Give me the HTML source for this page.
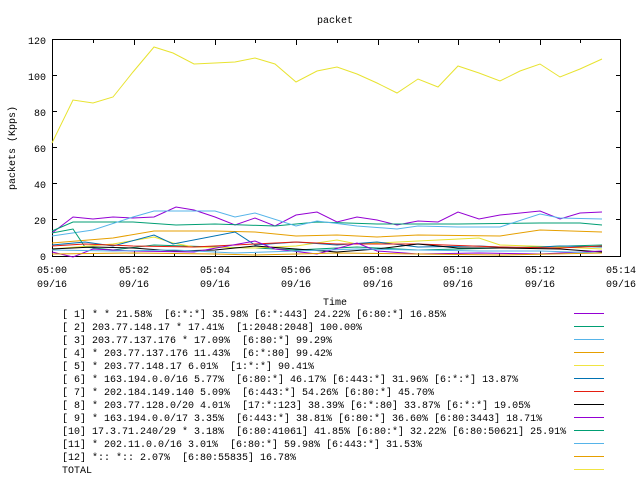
<!DOCTYPE html>
<html><head><meta charset="utf-8"><style>
html,body{margin:0;padding:0;background:#fff;width:640px;height:480px;overflow:hidden}
svg text{font-family:"Liberation Mono","DejaVu Sans Mono",monospace;font-size:10px;fill:#000;white-space:pre}
</style></head><body>
<svg width="640" height="480" xmlns="http://www.w3.org/2000/svg" xml:space="preserve">
<rect width="640" height="480" fill="#fff"/>
<text x="335" y="23" text-anchor="middle">packet</text>
<g text-anchor="end">
<text x="46" y="44">120</text><text x="46" y="80">100</text><text x="46" y="116">80</text>
<text x="46" y="152">60</text><text x="46" y="188">40</text><text x="46" y="224">20</text><text x="46" y="260">0</text>
</g>
<text transform="translate(15,148) rotate(-90)" text-anchor="middle">packets (Kpps)</text>
<g text-anchor="middle">
<text x="52" y="273">05:00</text><text x="52" y="287">09/16</text>
<text x="134" y="273">05:02</text><text x="134" y="287">09/16</text>
<text x="215" y="273">05:04</text><text x="215" y="287">09/16</text>
<text x="296" y="273">05:06</text><text x="296" y="287">09/16</text>
<text x="378" y="273">05:08</text><text x="378" y="287">09/16</text>
<text x="458" y="273">05:10</text><text x="458" y="287">09/16</text>
<text x="540" y="273">05:12</text><text x="540" y="287">09/16</text>
<text x="621" y="273">05:14</text><text x="621" y="287">09/16</text>
<text x="335" y="305">Time</text>
</g>
<g stroke="#000" stroke-width="1" fill="none">
<rect x="52.5" y="39.5" width="568" height="217"/>
<path d="M52 75.5h5M52 111.5h5M52 147.5h5M52 183.5h5M52 219.5h5M621 75.5h-5M621 111.5h-5M621 147.5h-5M621 183.5h-5M621 219.5h-5
M134.5 256v-5M215.5 256v-5M296.5 256v-5M378.5 256v-5M458.5 256v-5M540.5 256v-5
M134.5 40v5M215.5 40v5M296.5 40v5M378.5 40v5M458.5 40v5M540.5 40v5
M93.5 256v-3M174.5 256v-3M255.5 256v-3M337.5 256v-3M418.5 256v-3M499.5 256v-3M580.5 256v-3
M93.5 40v3M174.5 40v3M255.5 40v3M337.5 40v3M418.5 40v3M499.5 40v3M580.5 40v3"/>
</g>
<g fill="none" stroke-width="1">
<polyline stroke="#e8e330" points="52,143 73,100 93,103 113,97 133,72 154,47 173,53 194,64 215,63 235,62 255,58 275,64 296,82 317,71 337,67 357,74 377,83 397,93 418,79 438,87 458,66 479,73 500,81 520,71 540,64 560,77 580,69 602,59"/>
<polyline stroke="#9400d3" points="52,233 73,217 93,219 113,217 133,218 154,217 176,207 194,210 215,217 235,225 255,218 275,226 296,215 317,212 337,222 357,217 377,220 397,225 418,221 438,222 458,212 479,219 500,215 540,211 560,219 580,213 602,212"/>
<polyline stroke="#009e73" points="52,231 73,222 133,222 176,225 215,224 275,226 317,222 377,224 458,224 540,223 580,223 602,225"/>
<polyline stroke="#56b4e9" points="52,236 93,230 133,217 154,211 215,211 235,217 255,213 296,226 317,221 357,226 397,229 418,226 458,227 500,227 540,214 560,218 602,219"/>
<polyline stroke="#e69f00" points="52,243 113,238 154,231 215,231 255,232 296,236 337,235 377,237 418,235 500,236 540,230 602,232"/>
<polyline stroke="#009e73" points="52,233 73,229 85,247 113,250 154,245 215,247 255,248 296,250 357,247 418,250 500,248 602,245"/>
<polyline stroke="#e8e330" points="52,249 113,244 154,237 173,243 194,247 255,248 296,246 337,240 357,244 418,241 479,238 500,245 560,247 602,249"/>
<polyline stroke="#0072b2" points="52,245 85,242 113,246 154,235 173,244 235,232 255,245 296,242 337,245 377,242 418,247 479,246 520,248 560,246 602,247"/>
<polyline stroke="#e51e10" points="52,246 85,244 133,246 194,247 255,244 296,242 337,244 418,244 500,247 560,248 602,246"/>
<polyline stroke="#000000" points="52,249 93,247 133,248 174,251 215,250 255,246 296,249 337,252 377,249 418,244 458,248 500,248 560,249 602,252"/>
<polyline stroke="#9400d3" points="52,252 73,257 93,249 133,251 194,252 255,241 275,249 317,254 357,243 377,251 418,254 479,253 540,254 602,251"/>
<polyline stroke="#56b4e9" points="52,250 113,251 174,250 235,253 296,251 357,249 418,250 479,251 540,251 602,253"/>
<polyline stroke="#e69f00" points="52,254 133,253 215,254 255,255 337,253 418,254 500,255 602,253"/>
</g>
<g font-size="10">
<text x="62" y="317">[ 1] * * 21.58%  [6:*:*] 35.98% [6:*:443] 24.22% [6:80:*] 16.85%</text>
<text x="62" y="330">[ 2] 203.77.148.17 * 17.41%  [1:2048:2048] 100.00%</text>
<text x="62" y="343">[ 3] 203.77.137.176 * 17.09%  [6:80:*] 99.29%</text>
<text x="62" y="356">[ 4] * 203.77.137.176 11.43%  [6:*:80] 99.42%</text>
<text x="62" y="369">[ 5] * 203.77.148.17 6.01%  [1:*:*] 90.41%</text>
<text x="62" y="382">[ 6] * 163.194.0.0/16 5.77%  [6:80:*] 46.17% [6:443:*] 31.96% [6:*:*] 13.87%</text>
<text x="62" y="395">[ 7] * 202.184.149.140 5.09%  [6:443:*] 54.26% [6:80:*] 45.70%</text>
<text x="62" y="408">[ 8] * 203.77.128.0/20 4.01%  [17:*:123] 38.39% [6:*:80] 33.87% [6:*:*] 19.05%</text>
<text x="62" y="421">[ 9] * 163.194.0.0/17 3.35%  [6:443:*] 38.81% [6:80:*] 36.60% [6:80:3443] 18.71%</text>
<text x="62" y="434">[10] 17.3.71.240/29 * 3.18%  [6:80:41061] 41.85% [6:80:*] 32.22% [6:80:50621] 25.91%</text>
<text x="62" y="447">[11] * 202.11.0.0/16 3.01%  [6:80:*] 59.98% [6:443:*] 31.53%</text>
<text x="62" y="460">[12] *:: *:: 2.07%  [6:80:55835] 16.78%</text>
<text x="62" y="473">TOTAL</text>
</g>
<g stroke-width="1">
<line x1="574" x2="604" y1="313.5" y2="313.5" stroke="#9400d3"/>
<line x1="574" x2="604" y1="326.5" y2="326.5" stroke="#009e73"/>
<line x1="574" x2="604" y1="339.5" y2="339.5" stroke="#56b4e9"/>
<line x1="574" x2="604" y1="352.5" y2="352.5" stroke="#e69f00"/>
<line x1="574" x2="604" y1="365.5" y2="365.5" stroke="#f0e442"/>
<line x1="574" x2="604" y1="378.5" y2="378.5" stroke="#0072b2"/>
<line x1="574" x2="604" y1="391.5" y2="391.5" stroke="#e51e10"/>
<line x1="574" x2="604" y1="404.5" y2="404.5" stroke="#000"/>
<line x1="574" x2="604" y1="417.5" y2="417.5" stroke="#9400d3"/>
<line x1="574" x2="604" y1="430.5" y2="430.5" stroke="#009e73"/>
<line x1="574" x2="604" y1="443.5" y2="443.5" stroke="#56b4e9"/>
<line x1="574" x2="604" y1="456.5" y2="456.5" stroke="#e69f00"/>
<line x1="574" x2="604" y1="469.5" y2="469.5" stroke="#f0e442"/>
</g>
</svg>
</body></html>
